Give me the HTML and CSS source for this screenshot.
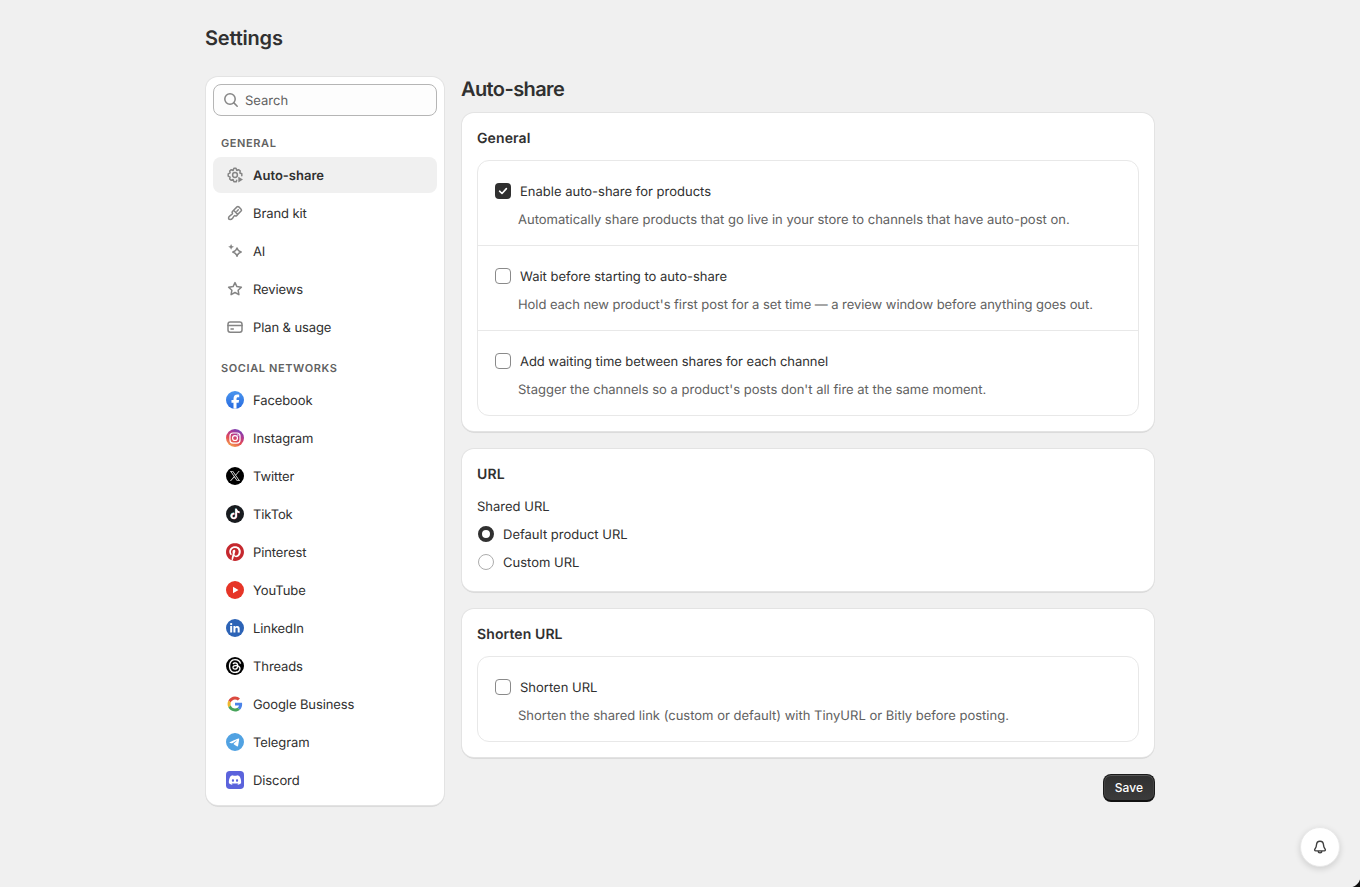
FILE: index.html
```html
<!DOCTYPE html>
<html lang="en">
<head>
<meta charset="utf-8">
<title>Settings</title>
<link rel="stylesheet" href="styles.css">
</head>
<body>
<div class="page">
  <h1 class="page-title">Settings</h1>
  <div class="layout">
    <nav class="sidebar">
      <label class="search">
        <svg class="icon" viewBox="0 0 20 20"><circle cx="9" cy="9" r="5.2"/><path d="M12.9 12.9 16.2 16.2"/></svg>
        <span class="text">Search</span>
      </label>
      <h2 class="group">General</h2>
      <ul class="menu">
        <li class="item active"><svg class="icon" viewBox="0 0 20 20"><path d="M16.800 10.800V8.800L14.900 8 15.200 5.900 13.500 4.700 11.800 5.500 11 3.300H8.900L8.100 5.500 6.300 4.700 4.700 6 5.100 7.900 3.200 8.900V11.100L5.100 12.100 4.700 14 6.300 15.300 8.100 14.500 8.900 16.700H11.200L11.700 15.200"/><circle cx="10" cy="10" r="2.400"/><path class="solid" d="M13.300 11.800v5.600l4.700-2.800z"/></svg><span class="text">Auto-share</span></li>
        <li class="item"><svg class="icon" viewBox="0 0 20 20"><path d="M12 3.900a1.300 1.300 0 0 1 1.800 0l2.300 2.300a1.300 1.300 0 0 1 0 1.800L12.700 11.400 8.600 7.300zM8.600 7.300 7.400 8.500a1 1 0 0 0 0 1.400L7.600 10.200C7.600 11.600 3.500 13 3.500 15 3.500 17 6.200 17 7.600 15.200 8.700 13.700 9 12.500 9.900 12.500L10.200 12.700a1 1 0 0 0 1.400 0L12.700 11.400M13.300 6.800 11.900 8.200"/></svg><span class="text">Brand kit</span></li>
        <li class="item"><svg class="icon" viewBox="0 0 20 20"><path d="M12 6.900C12.700 9.600 13.500 10.400 16.200 11.100 13.500 11.800 12.700 12.600 12 15.300 11.300 12.600 10.500 11.800 7.800 11.100 10.500 10.400 11.300 9.600 12 6.900z"/><path class="solid" d="M6.100 2.900 7 4.900 9 5.800 7 6.700 6.100 8.700 5.200 6.700 3.200 5.800 5.200 4.900z"/></svg><span class="text">AI</span></li>
        <li class="item"><svg class="icon" viewBox="0 0 20 20"><path d="M10 3.600 11.900 7.600 16.400 8.200 13.100 11.200 13.900 15.700 10 13.500 6.100 15.700 6.900 11.200 3.600 8.200 8.100 7.600z"/></svg><span class="text">Reviews</span></li>
        <li class="item"><svg class="icon" viewBox="0 0 20 20"><rect x="3" y="5" width="14" height="10.200" rx="2.200"/><path d="M3 8.500h14M6 12h2.300"/></svg><span class="text">Plan &amp; usage</span></li>
      </ul>
      <h2 class="group">Social networks</h2>
      <ul class="menu">
        <li class="item"><svg class="brand" viewBox="0 0 24 24"><defs><linearGradient id="fb" x1="0" y1="0" x2="0" y2="1"><stop offset="0" stop-color="#4a96ee"/><stop offset="1" stop-color="#286ae0"/></linearGradient></defs><circle cx="12" cy="12" r="12" fill="url(#fb)"/><path fill="#fff" d="M10 23.800v-8H7.300v-3.800H10v-1.500c0-4 1.800-5.800 5.400-5.800.9 0 1.600.1 2.200.300v3.300c-2.200-.2-3.600-.1-3.600 2.400v1.300h3.500l-.7 3.800H14v8z"/></svg><span class="text">Facebook</span></li>
        <li class="item"><svg class="brand" viewBox="0 0 24 24"><defs><linearGradient id="ig" x1=".2" y1="1" x2=".7" y2="0"><stop offset="0" stop-color="#f6b04e"/><stop offset=".4" stop-color="#e34b55"/><stop offset=".7" stop-color="#b23990"/><stop offset="1" stop-color="#7042b8"/></linearGradient></defs><circle cx="12" cy="12" r="12" fill="url(#ig)"/><g fill="none" stroke="#fff" stroke-width="1.600"><rect x="5.300" y="5.300" width="13.400" height="13.400" rx="4"/><circle cx="12" cy="12" r="3.300"/></g><circle cx="15.900" cy="8.100" r="1" fill="#fff"/></svg><span class="text">Instagram</span></li>
        <li class="item"><svg class="brand" viewBox="0 0 24 24"><circle cx="12" cy="12" r="12"/><path fill="#fff" transform="translate(5.200 5.200) scale(.567)" d="M14.234 10.162 22.977 0h-2.072l-7.591 8.824L7.251 0H.258l9.168 13.343L.258 24H2.330l8.016-9.318L16.749 24h6.993zm-2.837 3.299-.929-1.329L3.076 1.560h3.182l5.965 8.532.929 1.329 7.754 11.090h-3.182z"/></svg><span class="text">Twitter</span></li>
        <li class="item"><svg class="brand" viewBox="0 0 24 24"><defs><path id="note" d="M12.525.02c1.310-.02 2.610-.01 3.910-.02.08 1.530.63 3.090 1.750 4.170 1.120 1.110 2.700 1.620 4.240 1.790v4.030c-1.440-.05-2.890-.35-4.200-.97-.57-.26-1.100-.59-1.620-.93-.01 2.920.01 5.840-.02 8.750-.08 1.400-.54 2.790-1.350 3.940-1.310 1.920-3.580 3.170-5.910 3.210-1.430.08-2.860-.31-4.080-1.030-2.020-1.190-3.440-3.370-3.650-5.710-.02-.5-.03-1-.01-1.490.18-1.900 1.120-3.720 2.580-4.960 1.660-1.440 3.980-2.130 6.150-1.720.02 1.480-.04 2.960-.04 4.440-.99-.32-2.150-.23-3.020.37-.63.41-1.110 1.040-1.360 1.750-.21.510-.15 1.070-.14 1.610.24 1.640 1.820 3.020 3.500 2.870 1.120-.01 2.190-.66 2.770-1.610.19-.33.400-.67.410-1.060.100-1.790.06-3.570.07-5.360.01-4.030-.01-8.050.02-12.070z"/></defs><circle cx="12" cy="12" r="12" fill="#181b1f"/><use href="#note" fill="#5cc5c8" transform="translate(4.700 4.800) scale(.57)"/><use href="#note" fill="#d8566f" transform="translate(5.700 5.500) scale(.57)"/><use href="#note" fill="#fff" transform="translate(5.200 5.100) scale(.57)"/></svg><span class="text">TikTok</span></li>
        <li class="item"><svg class="brand" viewBox="0 0 24 24"><circle cx="12" cy="12" r="11.700" fill="#fff"/><path fill="#c5282e" d="M12.017 0C5.396 0 .029 5.367.029 11.987c0 5.079 3.158 9.417 7.618 11.162-.105-.949-.199-2.403.041-3.439.219-.937 1.406-5.957 1.406-5.957s-.359-.72-.359-1.781c0-1.663.967-2.911 2.168-2.911 1.024 0 1.518.769 1.518 1.688 0 1.029-.653 2.567-.992 3.992-.285 1.193.6 2.165 1.775 2.165 2.128 0 3.768-2.245 3.768-5.487 0-2.861-2.063-4.869-5.008-4.869-3.410 0-5.409 2.562-5.409 5.199 0 1.033.394 2.143.889 2.741.099.12.112.225.085.345-.09.375-.293 1.199-.334 1.363-.053.225-.172.271-.401.165-1.495-.69-2.433-2.878-2.433-4.646 0-3.776 2.748-7.252 7.920-7.252 4.158 0 7.392 2.967 7.392 6.923 0 4.135-2.607 7.462-6.233 7.462-1.214 0-2.354-.629-2.758-1.379l-.749 2.848c-.269 1.045-1.004 2.352-1.498 3.146 1.123.345 2.306.535 3.550.535 6.607 0 11.985-5.365 11.985-11.987C23.970 5.390 18.592.026 11.985.026z"/></svg><span class="text">Pinterest</span></li>
        <li class="item"><svg class="brand" viewBox="0 0 24 24"><circle cx="12" cy="12" r="12" fill="#e63527"/><path fill="#fff" d="M9.300 7.600v8.800l7.400-4.400z"/></svg><span class="text">YouTube</span></li>
        <li class="item"><svg class="brand" viewBox="0 0 24 24"><circle cx="12" cy="12" r="12" fill="#2c63b6"/><path fill="#fff" transform="translate(2.900 2.700) scale(.75)" d="M20.447 20.452h-3.554v-5.569c0-1.328-.027-3.037-1.852-3.037-1.853 0-2.136 1.445-2.136 2.939v5.667H9.351V9h3.414v1.561h.046c.477-.9 1.637-1.850 3.370-1.850 3.601 0 4.267 2.370 4.267 5.455v6.286zM5.337 7.433a2.062 2.062 0 0 1-2.063-2.065 2.064 2.064 0 1 1 2.063 2.065zm1.782 13.019H3.555V9h3.564v11.452z"/></svg><span class="text">LinkedIn</span></li>
        <li class="item"><svg class="brand" viewBox="0 0 24 24"><circle cx="12" cy="12" r="12"/><path fill="#fff" stroke="#fff" stroke-width=".3" transform="translate(2.800 2.800) scale(.77)" d="M12.186 24h-.007c-3.581-.024-6.334-1.205-8.184-3.509C2.350 18.440 1.500 15.586 1.472 12.010v-.017c.03-3.579.879-6.430 2.525-8.482C5.845 1.205 8.600.024 12.180 0h.014c2.746.02 5.043.725 6.826 2.098 1.677 1.290 2.858 3.130 3.509 5.467l-2.040.569c-1.104-3.960-3.898-5.984-8.304-6.015-2.910.022-5.110.936-6.540 2.717C4.307 6.504 3.616 8.914 3.589 12c.027 3.086.718 5.496 2.057 7.164 1.430 1.783 3.631 2.698 6.540 2.717 2.623-.02 4.358-.631 5.800-2.045 1.647-1.613 1.618-3.593 1.090-4.798-.31-.71-.873-1.300-1.634-1.750-.192 1.352-.622 2.446-1.284 3.272-.886 1.102-2.140 1.704-3.730 1.790-1.202.065-2.361-.218-3.259-.801-1.063-.689-1.685-1.740-1.752-2.964-.065-1.190.408-2.285 1.330-3.082.88-.76 2.119-1.207 3.583-1.291a13.853 13.853 0 0 1 3.020.142c-.126-.742-.375-1.332-.75-1.757-.513-.586-1.308-.883-2.359-.89h-.029c-.844 0-1.992.232-2.721 1.320L7.734 7.847c.98-1.454 2.568-2.256 4.478-2.256h.044c3.194.02 5.097 1.975 5.287 5.388.108.046.216.094.321.142 1.490.7 2.580 1.761 3.154 3.070.797 1.820.871 4.790-1.548 7.158-1.850 1.810-4.094 2.628-7.277 2.650Zm1.003-11.690c-.242 0-.487.007-.739.021-1.836.103-2.980.946-2.916 2.143.067 1.256 1.452 1.839 2.784 1.767 1.224-.065 2.818-.543 3.086-3.710a10.500 10.500 0 0 0-2.215-.221z"/></svg><span class="text">Threads</span></li>
        <li class="item"><svg class="brand" viewBox="-5 -5 58 58"><path fill="#db4a3f" d="M24 9.500c3.540 0 6.710 1.220 9.210 3.600l6.850-6.850C35.900 2.380 30.470 0 24 0 14.620 0 6.510 5.380 2.560 13.220l7.980 6.190C12.430 13.720 17.740 9.500 24 9.500z"/><path fill="#4b83e8" d="M46.980 24.550c0-1.570-.15-3.090-.38-4.550H24v9.020h12.940c-.58 2.960-2.260 5.480-4.780 7.180l7.730 6c4.510-4.180 7.090-10.360 7.090-17.650z"/><path fill="#eeb72e" d="M10.530 28.590c-.48-1.450-.76-2.990-.76-4.590s.27-3.140.76-4.590l-7.980-6.190C.92 16.460 0 20.120 0 24c0 3.880.92 7.540 2.560 10.780l7.970-6.190z"/><path fill="#47a45a" d="M24 48c6.480 0 11.930-2.130 15.890-5.810l-7.730-6c-2.150 1.450-4.920 2.300-8.160 2.300-6.260 0-11.570-4.220-13.470-9.910l-7.980 6.190C6.510 42.620 14.620 48 24 48z"/></svg><span class="text">Google Business</span></li>
        <li class="item"><svg class="brand" viewBox="0 0 24 24"><circle cx="12" cy="12" r="11.700" fill="#fff"/><path fill="#51a2e2" d="M11.944 0A12 12 0 0 0 0 12a12 12 0 0 0 12 12 12 12 0 0 0 12-12A12 12 0 0 0 12 0a12 12 0 0 0-.056 0zm4.962 7.224c.1-.002.321.023.465.14a.506.506 0 0 1 .171.325c.016.093.036.306.02.472-.18 1.898-.962 6.502-1.360 8.627-.168.9-.499 1.201-.82 1.230-.696.065-1.225-.46-1.900-.902-1.056-.693-1.653-1.124-2.678-1.800-1.185-.78-.417-1.210.258-1.910.177-.184 3.247-2.977 3.307-3.230.007-.032.014-.15-.056-.212s-.174-.041-.249-.024c-.106.024-1.793 1.140-5.061 3.345-.48.33-.913.49-1.302.48-.428-.008-1.252-.241-1.865-.44-.752-.245-1.349-.374-1.297-.789.027-.216.325-.437.893-.663 3.498-1.524 5.830-2.529 6.998-3.014 3.332-1.386 4.025-1.627 4.476-1.635z"/></svg><span class="text">Telegram</span></li>
        <li class="item"><svg class="brand" viewBox="0 0 24 24"><rect width="24" height="24" rx="5" fill="#5b63dc"/><path fill="#fff" transform="translate(3.800 3.800) scale(.683)" d="M20.317 4.370a19.791 19.791 0 00-4.885-1.515.0741.0741 0 00-.0785.0371c-.211.3753-.4447.8648-.6083 1.2495-1.8447-.2762-3.680-.2762-5.4868 0-.1636-.3933-.4058-.8742-.6177-1.2495a.077.077 0 00-.0785-.037 19.7363 19.7363 0 00-4.8852 1.515.0699.0699 0 00-.0321.0277C.5334 9.0458-.319 13.5799.0992 18.0578a.0824.0824 0 00.0312.0561c2.0528 1.5076 4.0413 2.4228 5.9929 3.0294a.0777.0777 0 00.0842-.0276c.4616-.6304.8731-1.2952 1.226-1.9942a.076.076 0 00-.0416-.1057c-.6528-.2476-1.2743-.5495-1.8722-.8923a.077.077 0 01-.0076-.1277c.1258-.0943.2517-.1923.3718-.2914a.0743.0743 0 01.0776-.0105c3.9278 1.7933 8.180 1.7933 12.0614 0a.0739.0739 0 01.0785.0095c.1202.099.246.1981.3728.2924a.077.077 0 01-.0066.1276 12.2986 12.2986 0 01-1.873.8914.0766.0766 0 00-.0407.1067c.3604.698.7719 1.3628 1.225 1.9932a.076.076 0 00.0842.0286c1.961-.6067 3.9495-1.5219 6.0023-3.0294a.077.077 0 00.0313-.0552c.5004-5.177-.8382-9.6739-3.5485-13.6604a.061.061 0 00-.0312-.0286zM8.020 15.3312c-1.1825 0-2.1569-1.0857-2.1569-2.419 0-1.3332.9555-2.4189 2.157-2.4189 1.2108 0 2.1757 1.0952 2.1568 2.419 0 1.3332-.9555 2.4189-2.1569 2.4189zm7.9748 0c-1.1825 0-2.1569-1.0857-2.1569-2.419 0-1.3332.9554-2.4189 2.1569-2.4189 1.2108 0 2.1757 1.0952 2.1568 2.419 0 1.3332-.946 2.4189-2.1568 2.4189z"/></svg><span class="text">Discord</span></li>
      </ul>
    </nav>
    <main class="content">
      <h2 class="content-title">Auto-share</h2>
      <section class="card">
        <h3 class="card-title">General</h3>
        <div class="options">
          <div class="option">
            <div class="choice"><span class="checkbox checked"><svg viewBox="0 0 16 16"><path d="M4.600 8.200 7 10.500 11.400 5.600"/></svg></span><span class="text">Enable auto-share for products</span></div>
            <p class="help">Automatically share products that go live in your store to channels that have auto-post on.</p>
          </div>
          <div class="option">
            <div class="choice"><span class="checkbox"></span><span class="text">Wait before starting to auto-share</span></div>
            <p class="help tight">Hold each new product's first post for a set time — a review window before anything goes out.</p>
          </div>
          <div class="option">
            <div class="choice"><span class="checkbox"></span><span class="text tight">Add waiting time between shares for each channel</span></div>
            <p class="help">Stagger the channels so a product's posts don't all fire at the same moment.</p>
          </div>
        </div>
      </section>
      <section class="card">
        <h3 class="card-title">URL</h3>
        <div class="radios">
          <div class="legend">Shared URL</div>
          <div class="choice"><span class="radio selected"></span><span class="text">Default product URL</span></div>
          <div class="choice"><span class="radio"></span><span class="text">Custom URL</span></div>
        </div>
      </section>
      <section class="card">
        <h3 class="card-title">Shorten URL</h3>
        <div class="options">
          <div class="option">
            <div class="choice"><span class="checkbox"></span><span class="text">Shorten URL</span></div>
            <p class="help">Shorten the shared link (custom or default) with TinyURL or Bitly before posting.</p>
          </div>
        </div>
      </section>
      <button class="save" type="button">Save</button>
    </main>
  </div>
</div>
<button class="bell" type="button" aria-label="Notifications"><svg viewBox="0 0 20 20"><path d="M10 4.200C7.900 4.200 6.600 5.700 6.500 7.800 6.400 10.200 6 10.600 5 11.900 4.200 13 4.700 13.900 5.700 13.900H14.300C15.300 13.900 15.800 13 15 11.900 14 10.600 13.600 10.200 13.500 7.800 13.400 5.700 12.100 4.200 10 4.200zM8.200 14.100C8.200 16.500 11.800 16.500 11.800 14.100"/></svg></button>
<div class="corner"></div>
</body>
</html>
```
FILE: styles.css
```css
* { box-sizing: border-box; }
body {
  margin: 0;
  height: 887px;
  overflow: hidden;
  background: #f0f0f0;
  color: #303030;
  font: 400 13px/20px Inter, "Liberation Sans", sans-serif;
  letter-spacing: 0;
  text-rendering: geometricPrecision;
}
h1, h2, h3, p, ul { margin: 0; padding: 0; }
.page { width: 948px; margin: 0 auto; padding-top: 24px; }
.page-title, .content-title {
  font-size: 20px;
  line-height: 28px;
  font-weight: 600;
  letter-spacing: -0.2px;
}
.page-title { margin: 0 0 25px -1px; }
.layout { display: flex; align-items: flex-start; gap: 18px; }
.sidebar, .card {
  background: #fff;
  border-radius: 12px;
  box-shadow: 0 0 0 1px #e3e3e3, 0 1px 0 0.5px #cfcfcf, 0 2px 1px rgba(0, 0, 0, 0.04);
}
.sidebar { width: 238px; height: 728px; padding: 7px; }
.search {
  display: flex;
  align-items: center;
  gap: 4px;
  height: 32px;
  padding: 0 8px 0 7px;
  border: 1px solid #b5b5b5;
  border-radius: 8px;
  background: #fdfdfd;
  color: #616161;
}
.text { padding-top: 2px; }
.icon {
  width: 20px;
  height: 20px;
  flex: none;
  fill: none;
  stroke: #858585;
  stroke-width: 1.5;
  stroke-linecap: round;
  stroke-linejoin: round;
}
.icon .solid { fill: #858585; stroke: none; }
.group {
  margin: 17px 8px 4px;
  color: #616161;
  font-size: 11px;
  line-height: 20px;
  font-weight: 600;
  letter-spacing: 0.6px;
  text-transform: uppercase;
}
.menu + .group { margin-top: 13px; }
.menu { display: grid; gap: 2px; list-style: none; }
.item {
  display: flex;
  align-items: center;
  gap: 8px;
  height: 36px;
  padding: 0 12px;
  border-radius: 8px;
  letter-spacing: -0.1px;
}
.item.active { background: #f0f0f0; font-weight: 600; letter-spacing: 0; }
.brand { width: 18px; height: 18px; margin: 0 1px; flex: none; }
.content { display: grid; gap: 18px; width: 692px; }
.content-title { height: 18px; margin-left: -1px; line-height: 24px; letter-spacing: -0.6px; }
.card { padding: 15px; }
.card-title { padding-top: 1px; font-size: 14px; line-height: 20px; font-weight: 600; letter-spacing: 0.1px; }
.options { margin-top: 11px; border: 1px solid #e8e8e8; border-radius: 12px; }
.option { height: 84px; padding: 20px 17px 16px; }
.option + .option { height: 85px; border-top: 1px solid #e8e8e8; }
.choice { display: flex; align-items: center; gap: 9px; height: 20px; }
.help { margin: 9px 0 0 23px; color: #616161; white-space: nowrap; }
.tight { letter-spacing: -0.06px; }
.checkbox {
  display: grid;
  width: 16px;
  height: 16px;
  flex: none;
  border: 1px solid #8a8a8a;
  border-radius: 4px;
}
.checkbox.checked { border: 0; background: #303030; }
.checkbox svg { width: 16px; height: 16px; fill: none; stroke: #fff; stroke-width: 1.6; stroke-linecap: round; stroke-linejoin: round; }
.radios { display: grid; gap: 8px; padding: 12px 0 4px; }
.legend { height: 19px; }
.radio { width: 16px; height: 16px; margin-left: 1px; border: 1px solid #adadad; border-radius: 50%; }
.radio.selected { border: 4px solid #303030; }
.save {
  justify-self: end;
  width: 52px;
  height: 28px;
  margin: -1px -1px 0 0;
  padding: 1px 0 0;
  border: 1px solid #1a1a1a;
  border-bottom: 2px solid #111;
  border-radius: 8px;
  background: linear-gradient(#303030, #3b3b3b);
  box-shadow: inset 0 1px 0 #555, inset 1px 0 0 #444, inset -1px 0 0 #444;
  color: #fff;
  font: 500 12px/20px Inter, "Liberation Sans", sans-serif;
  letter-spacing: 0.1px;
}
.bell {
  position: fixed;
  right: 20px;
  bottom: 20px;
  display: grid;
  place-items: center;
  width: 40px;
  height: 40px;
  padding: 0;
  border: 1px solid #e8e8e8;
  border-radius: 50%;
  background: #fff;
  box-shadow: 0 2px 6px rgba(0, 0, 0, 0.14);
}
.bell svg { width: 20px; height: 20px; fill: none; stroke: #404040; stroke-width: 1.4; }
.corner {
  position: fixed;
  right: 0;
  bottom: 0;
  width: 11px;
  height: 11px;
  background: radial-gradient(circle at 0 0, transparent 11px, #101010 12px);
}
```
